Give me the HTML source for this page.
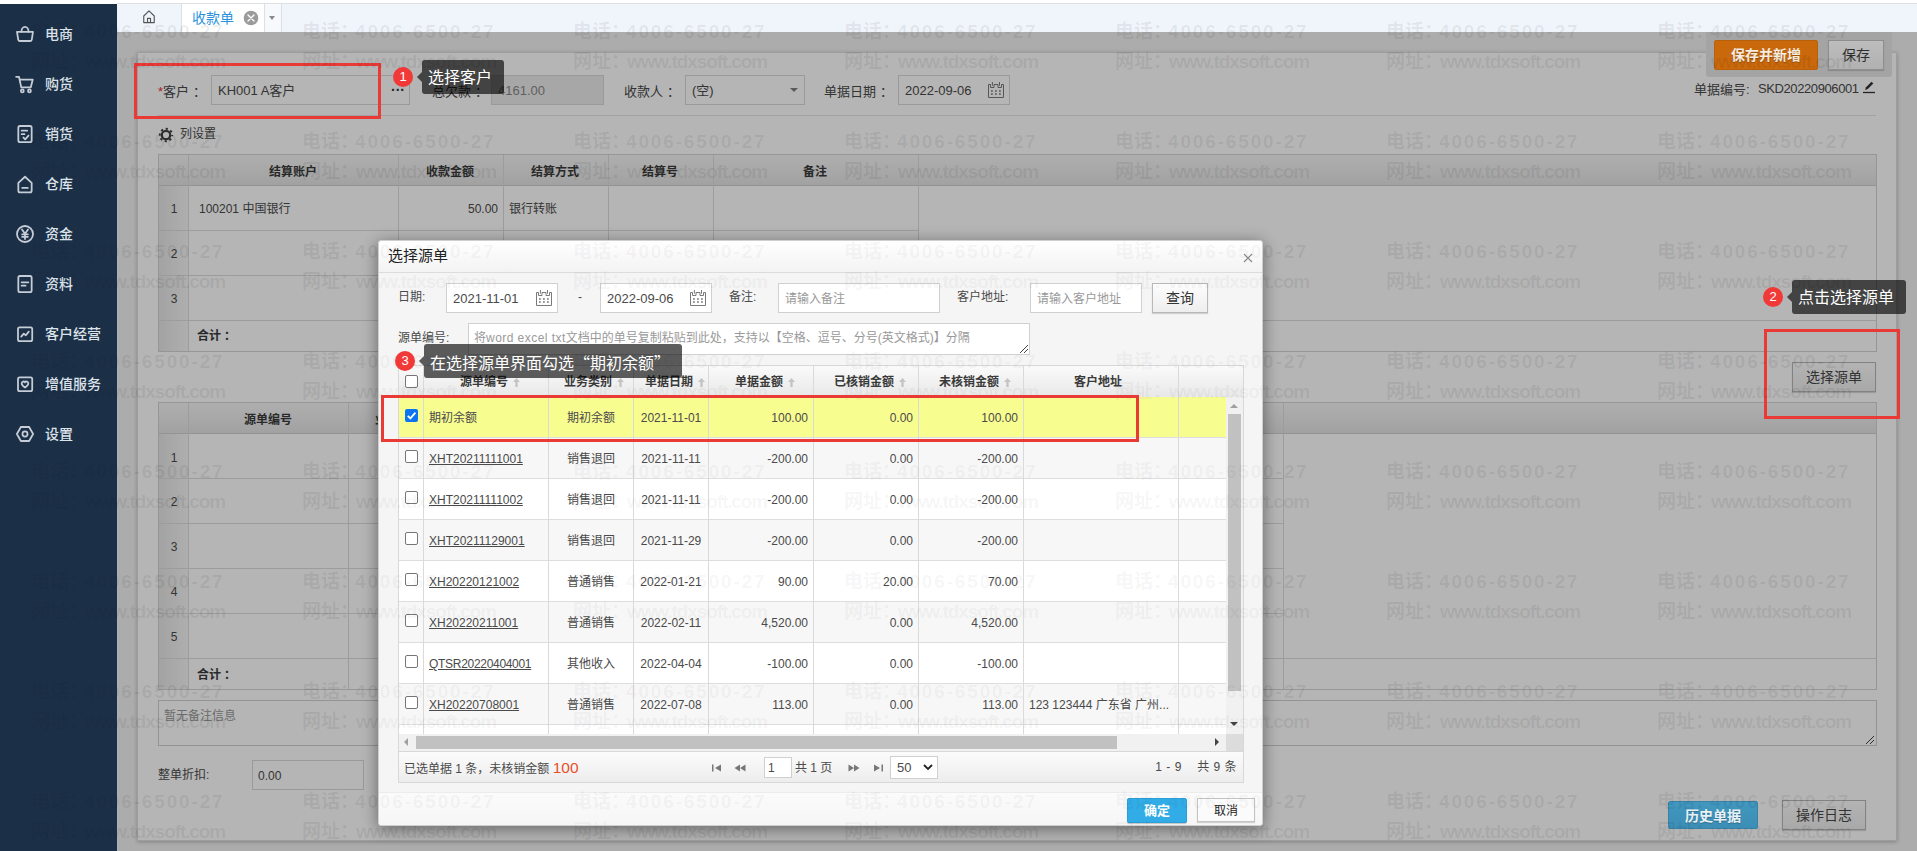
<!DOCTYPE html>
<html lang="zh-CN">
<head>
<meta charset="utf-8">
<title>收款单</title>
<style>
*{box-sizing:border-box;margin:0;padding:0}
html,body{width:1917px;height:851px;overflow:hidden;background:#fff}
body{position:relative;font-family:"Liberation Sans","Noto Sans CJK SC",sans-serif;font-size:12px;color:#4a4a4a;line-height:1}
.a{position:absolute}
.t{position:absolute;white-space:nowrap;line-height:16px;height:16px}
.b{font-weight:bold;color:#3a3a3a}
#side{left:0;top:4px;width:117px;height:847px;background:#1b2f47}
#side .it{position:absolute;left:45px;color:#dde3ea;font-size:14px;font-weight:500;line-height:20px;white-space:nowrap}
#side svg{position:absolute;left:15px;width:20px;height:20px}
#tabbar{left:117px;top:0;width:1800px;height:32px;background:#f0f5fb}
#page{left:117px;top:32px;width:1800px;height:819px;background:#f3f3f3}
#panel{left:137px;top:52px;width:1760px;height:789px;background:#fff;border:1px solid #ddd;box-shadow:0 1px 4px rgba(0,0,0,.25)}
.inp{position:absolute;border:1px solid #d0d0d0;background:#fff;height:30px}
.pi{border-color:#dadada}
.inp span{position:absolute;left:6px;top:7px;line-height:16px;white-space:nowrap;font-size:13px}
.grid{position:absolute;border:1px solid #d4d4d4;background:#fff}
.gh{position:absolute;left:0;top:0;right:0;background:linear-gradient(#f6f6f6,#e4e4e4);border-bottom:1px solid #d0d0d0}
.vl{position:absolute;width:1px;background:#dcdcdc}
.hl{position:absolute;height:1px;background:#dcdcdc}
.btn{position:absolute;border:1px solid #b8b8b8;background:linear-gradient(#fdfdfd,#eeeeee);color:#484848;text-align:center;font-size:13px;box-shadow:0 1px 1px rgba(0,0,0,.15)}
#mask{left:117px;top:32px;width:1800px;height:819px;background:rgba(0,0,0,.29)}
.red{position:absolute;border:3px solid #e93a36}
.tip{position:absolute;background:rgba(0,0,0,.63);color:#fff;border-radius:3px;font-size:16px;white-space:nowrap;height:34px;line-height:36px;padding:0 12px 0 6px}
.tip:before{content:"";position:absolute;left:-5px;top:12px;border:5px solid transparent;border-left:0;border-right-color:rgba(0,0,0,.63)}
.num{position:absolute;width:20px;height:20px;border-radius:10px;background:#f13a37;color:#fff;font-size:13px;text-align:center;line-height:20px}
#dlg{left:378px;top:240px;width:885px;height:586px;background:#f5f5f5;border:1px solid #cfcfcf;border-radius:3px;box-shadow:0 3px 16px rgba(0,0,0,.45)}
#wm{left:0;top:0;width:1917px;height:851px;overflow:hidden;pointer-events:none}
.wm{color:rgba(0,0,0,.072);pointer-events:none}
.wm div{position:absolute;font-size:19px;font-weight:bold;white-space:nowrap;line-height:24px}
</style>
</head>
<body>
<div id="tabbar" class="a">
<div class="a" style="left:0;top:3px;width:1800px;height:1px;background:#dcdfe3"></div>
<div class="a" style="left:0;top:0;width:1800px;height:3px;background:#fff"></div>
<svg class="a" style="left:25px;top:9px;width:14px;height:15px" viewBox="0 0 16 16" preserveAspectRatio="none" fill="none" stroke="#555" stroke-width="1.300" stroke-linejoin="round"><path d="M2 7.500L8 2l6 5.500V14.500H2z"/><path d="M6.300 14.500V10h3.400v4.500"/></svg>
<div class="a" style="left:64px;top:4px;width:84px;height:28px;background:#fff;border-left:1px solid #dcdfe3;border-right:1px solid #dcdfe3"></div>
<div class="t" style="left:75px;top:10px;font-size:14px;color:#2b93dc">收款单</div>
<svg class="a" style="left:125.500px;top:9.500px;width:16px;height:16px" viewBox="0 0 16 16"><circle cx="8" cy="8" r="7.300" fill="#9b9b9b"/><path d="M5 5l6 6M11 5l-6 6" stroke="#fff" stroke-width="1.400" stroke-linecap="round"/></svg>
<div class="a" style="left:148px;top:4px;width:17px;height:28px;background:#f7f9fc;border-right:1px solid #dcdfe3"></div>
<div class="a" style="left:152px;top:16px;border:3.500px solid transparent;border-top:4px solid #8a8a8a;border-bottom:0"></div>
</div>
<div id="page" class="a"></div>
<div id="panel" class="a"></div>
<div class="t " style="left:158px;top:84px;font-size:13px"><span style="color:#e33">*</span>客户<span style="margin-left:4px">：</span></div>
<div class="inp pi" style="left:211px;top:75px;width:199px"><span>KH001 A客户</span><b style="position:absolute;right:4px;top:6px;font-size:14px;line-height:16px;letter-spacing:0;color:#333">···</b></div>
<div class="t " style="left:432px;top:84px;font-size:13px">总欠款<span style="margin-left:4px">：</span></div>
<div class="inp pi" style="left:491px;top:75px;width:113px;background:#ebebeb"><span style="color:#888">4161.00</span></div>
<div class="t " style="left:624px;top:84px;font-size:13px">收款人<span style="margin-left:4px">：</span></div>
<div class="inp pi" style="left:685px;top:75px;width:120px"><span>(空)</span><i class="a" style="right:6px;top:12px;border:4px solid transparent;border-top:4px solid #808080;border-bottom:0"></i></div>
<div class="t " style="left:824px;top:84px;font-size:13px">单据日期<span style="margin-left:4px">：</span></div>
<div class="inp pi" style="left:898px;top:75px;width:112px"><span>2022-09-06</span><svg class="a" style="left:89px;top:6px;width:16px;height:16px" viewBox="0 0 16 16" fill="none" stroke="#7a7a7a" stroke-width="1"><path d="M.5 2.500H2.500V5.500H6V2.500H10V5.500H13.500V2.500H15.500V15.500H.500z"/><path d="M4.400 0V3.700M11.500 0V3.700"/><path d="M3 9h1.800M7 9h1.800M11 9h1.800M3 12h1.800M7 12h1.800M11 12h1.800" stroke-width="1.700"/></svg></div>
<div class="t " style="left:1694px;top:82px;font-size:13px">单据编号:</div>
<div class="t " style="left:1758px;top:81px;font-size:13px;letter-spacing:-.4px">SKD20220906001</div>
<svg class="a" style="left:1862px;top:80px;width:14px;height:14px" viewBox="0 0 14 14" fill="none" stroke="#333" stroke-width="1.300"><path d="M1 12.500h12"/><path d="M3 10l1-2.800 5.500-5.500 1.800 1.800-5.500 5.500z" fill="#333" stroke="none"/></svg>
<div class="hl" style="left:158px;top:115px;width:1718px;background:#e4e4e4"></div>
<svg class="a" style="left:158px;top:127px;width:16px;height:16px" viewBox="0 0 16 16" fill="none" stroke="#444"><circle cx="8" cy="8" r="4.200" stroke-width="2.200"/><circle cx="8" cy="8" r="6.200" stroke-width="2" stroke-dasharray="2.200 2.670" stroke-dashoffset="1.100"/></svg>
<div class="t " style="left:180px;top:126px;">列设置</div>
<div class="grid" style="left:158px;top:154px;width:1719px;height:198px">
<div class="gh" style="height:31px"></div>
<div class="a" style="left:0;top:31px;width:29px;height:165px;background:linear-gradient(90deg,#e6e6e6,#f6f6f6)"></div>
<div class="vl" style="left:29px;top:0;height:196px"></div>
<div class="vl" style="left:239px;top:0;height:165px"></div>
<div class="vl" style="left:344px;top:0;height:165px"></div>
<div class="vl" style="left:449px;top:0;height:165px"></div>
<div class="vl" style="left:554px;top:0;height:165px"></div>
<div class="vl" style="left:759px;top:0;height:165px"></div>
<div class="hl" style="left:0;top:75px;width:760px"></div>
<div class="hl" style="left:0;top:120px;width:760px"></div>
<div class="hl" style="left:0;top:165px;width:1717px"></div>
<div class="t b" style="left:134px;top:9px;transform:translateX(-50%);">结算账户</div>
<div class="t b" style="left:291px;top:9px;transform:translateX(-50%);">收款金额</div>
<div class="t b" style="left:396px;top:9px;transform:translateX(-50%);">结算方式</div>
<div class="t b" style="left:501px;top:9px;transform:translateX(-50%);">结算号</div>
<div class="t b" style="left:656px;top:9px;transform:translateX(-50%);">备注</div>
<div class="t " style="left:15px;top:46px;transform:translateX(-50%);">1</div>
<div class="t " style="left:15px;top:91px;transform:translateX(-50%);">2</div>
<div class="t " style="left:15px;top:136px;transform:translateX(-50%);">3</div>
<div class="t " style="left:40px;top:46px;">100201 中国银行</div>
<div class="t " style="left:339px;top:46px;transform:translateX(-100%);">50.00</div>
<div class="t " style="left:350px;top:46px;">银行转账</div>
<div class="t b" style="left:38px;top:173px;">合计<span style="margin-left:3px">：</span></div>
</div>
<div class="btn" style="left:1792px;top:362px;width:84px;height:30px;line-height:28px;font-size:14px">选择源单</div>
<div class="grid" style="left:158px;top:402px;width:1719px;height:288px">
<div class="gh" style="height:31px"></div>
<div class="a" style="left:0;top:31px;width:29px;height:255px;background:linear-gradient(90deg,#e6e6e6,#f6f6f6)"></div>
<div class="vl" style="left:29px;top:0;height:286px"></div>
<div class="vl" style="left:189px;top:0;height:286px"></div>
<div class="vl" style="left:1124px;top:0;height:286px"></div>
<div class="hl" style="left:0;top:75px;width:1125px"></div>
<div class="hl" style="left:0;top:120px;width:1125px"></div>
<div class="hl" style="left:0;top:165px;width:1125px"></div>
<div class="hl" style="left:0;top:210px;width:1125px"></div>
<div class="hl" style="left:0;top:255px;width:1717px"></div>
<div class="t b" style="left:109px;top:9px;transform:translateX(-50%);">源单编号</div>
<div class="t b" style="left:240px;top:9px;transform:translateX(-50%);">业务类别</div>
<div class="t " style="left:15px;top:47px;transform:translateX(-50%);">1</div>
<div class="t " style="left:15px;top:91px;transform:translateX(-50%);">2</div>
<div class="t " style="left:15px;top:136px;transform:translateX(-50%);">3</div>
<div class="t " style="left:15px;top:181px;transform:translateX(-50%);">4</div>
<div class="t " style="left:15px;top:226px;transform:translateX(-50%);">5</div>
<div class="t b" style="left:38px;top:264px;">合计<span style="margin-left:3px">：</span></div>
</div>
<div class="a" style="left:158px;top:700px;width:1719px;height:46px;border:1px solid #d0d0d0;background:#fff"></div>
<div class="t " style="left:164px;top:708px;color:#999">暂无备注信息</div>
<svg class="a" style="left:1865px;top:735px;width:10px;height:10px" viewBox="0 0 10 10" stroke="#444" stroke-width="1"><path d="M9 1L1 9M9 5L5 9"/></svg>
<div class="t " style="left:158px;top:767px;">整单折扣:</div>
<div class="inp pi" style="left:252px;top:760px;width:112px"><span style="font-size:12px;left:5px">0.00</span></div>
<div class="btn" style="left:1782px;top:800px;width:84px;height:30px;line-height:28px;font-size:14px">操作日志</div>
<div id="mask" class="a"></div>
<div class="a" style="left:117px;top:32px;width:1px;height:819px;background:#a9b3c0"></div>
<div class="a" style="left:1706px;top:32px;width:186px;height:45px;background:#a4a4a4;border-radius:0 0 3px 3px"></div>
<div class="a b" style="left:1714px;top:40px;width:104px;height:30px;background:#ca690b;border:1px solid #b8600a;border-radius:2px;color:#f6ece0;font-size:14px;text-align:center;line-height:28px;text-shadow:0 1px 1px rgba(0,0,0,.25)">保存并新增</div>
<div class="a" style="left:1828px;top:40px;width:56px;height:30px;line-height:28px;font-size:14px;text-align:center;color:#2e2e2e;background:linear-gradient(#bdbdbd,#b1b1b1);border:1px solid #8e8e8e;box-shadow:0 1px 1px rgba(0,0,0,.15)">保存</div>
<div class="a b" style="left:1668px;top:801px;width:90px;height:28px;background:linear-gradient(#4197bf,#3c8eb6);border:1px solid #3783a8;border-radius:2px;color:#e9f1f6;font-size:14px;text-align:center;line-height:28px;text-shadow:0 1px 1px rgba(0,0,0,.25)">历史单据</div>
<div class="red" style="left:134px;top:63px;width:247px;height:56px"></div>
<div class="num" style="left:393px;top:67px">1</div><div class="tip" style="left:422px;top:60px">选择客户</div>
<div class="red" style="left:1764px;top:329px;width:136px;height:90px"></div>
<div class="num" style="left:1763px;top:287px">2</div><div class="tip" style="left:1792px;top:280px">点击选择源单</div>
<div id="wm" class="a wm"><div style="left:31px;top:20px">电话：</div><div style="left:84px;top:20px;letter-spacing:1.850px">4006-6500-27</div><div style="left:31px;top:50px">网址：</div><div style="left:85px;top:50px;letter-spacing:-1.100px">www.tdxsoft.com</div>
<div style="left:302px;top:20px">电话：</div><div style="left:355px;top:20px;letter-spacing:1.850px">4006-6500-27</div><div style="left:302px;top:50px">网址：</div><div style="left:356px;top:50px;letter-spacing:-1.100px">www.tdxsoft.com</div>
<div style="left:573px;top:20px">电话：</div><div style="left:626px;top:20px;letter-spacing:1.850px">4006-6500-27</div><div style="left:573px;top:50px">网址：</div><div style="left:627px;top:50px;letter-spacing:-1.100px">www.tdxsoft.com</div>
<div style="left:844px;top:20px">电话：</div><div style="left:897px;top:20px;letter-spacing:1.850px">4006-6500-27</div><div style="left:844px;top:50px">网址：</div><div style="left:898px;top:50px;letter-spacing:-1.100px">www.tdxsoft.com</div>
<div style="left:1115px;top:20px">电话：</div><div style="left:1168px;top:20px;letter-spacing:1.850px">4006-6500-27</div><div style="left:1115px;top:50px">网址：</div><div style="left:1169px;top:50px;letter-spacing:-1.100px">www.tdxsoft.com</div>
<div style="left:1386px;top:20px">电话：</div><div style="left:1439px;top:20px;letter-spacing:1.850px">4006-6500-27</div><div style="left:1386px;top:50px">网址：</div><div style="left:1440px;top:50px;letter-spacing:-1.100px">www.tdxsoft.com</div>
<div style="left:1657px;top:20px">电话：</div><div style="left:1710px;top:20px;letter-spacing:1.850px">4006-6500-27</div><div style="left:1657px;top:50px">网址：</div><div style="left:1711px;top:50px;letter-spacing:-1.100px">www.tdxsoft.com</div>
<div style="left:1928px;top:20px">电话：</div><div style="left:1981px;top:20px;letter-spacing:1.850px">4006-6500-27</div><div style="left:1928px;top:50px">网址：</div><div style="left:1982px;top:50px;letter-spacing:-1.100px">www.tdxsoft.com</div>
<div style="left:31px;top:130px">电话：</div><div style="left:84px;top:130px;letter-spacing:1.850px">4006-6500-27</div><div style="left:31px;top:160px">网址：</div><div style="left:85px;top:160px;letter-spacing:-1.100px">www.tdxsoft.com</div>
<div style="left:302px;top:130px">电话：</div><div style="left:355px;top:130px;letter-spacing:1.850px">4006-6500-27</div><div style="left:302px;top:160px">网址：</div><div style="left:356px;top:160px;letter-spacing:-1.100px">www.tdxsoft.com</div>
<div style="left:573px;top:130px">电话：</div><div style="left:626px;top:130px;letter-spacing:1.850px">4006-6500-27</div><div style="left:573px;top:160px">网址：</div><div style="left:627px;top:160px;letter-spacing:-1.100px">www.tdxsoft.com</div>
<div style="left:844px;top:130px">电话：</div><div style="left:897px;top:130px;letter-spacing:1.850px">4006-6500-27</div><div style="left:844px;top:160px">网址：</div><div style="left:898px;top:160px;letter-spacing:-1.100px">www.tdxsoft.com</div>
<div style="left:1115px;top:130px">电话：</div><div style="left:1168px;top:130px;letter-spacing:1.850px">4006-6500-27</div><div style="left:1115px;top:160px">网址：</div><div style="left:1169px;top:160px;letter-spacing:-1.100px">www.tdxsoft.com</div>
<div style="left:1386px;top:130px">电话：</div><div style="left:1439px;top:130px;letter-spacing:1.850px">4006-6500-27</div><div style="left:1386px;top:160px">网址：</div><div style="left:1440px;top:160px;letter-spacing:-1.100px">www.tdxsoft.com</div>
<div style="left:1657px;top:130px">电话：</div><div style="left:1710px;top:130px;letter-spacing:1.850px">4006-6500-27</div><div style="left:1657px;top:160px">网址：</div><div style="left:1711px;top:160px;letter-spacing:-1.100px">www.tdxsoft.com</div>
<div style="left:1928px;top:130px">电话：</div><div style="left:1981px;top:130px;letter-spacing:1.850px">4006-6500-27</div><div style="left:1928px;top:160px">网址：</div><div style="left:1982px;top:160px;letter-spacing:-1.100px">www.tdxsoft.com</div>
<div style="left:31px;top:240px">电话：</div><div style="left:84px;top:240px;letter-spacing:1.850px">4006-6500-27</div><div style="left:31px;top:270px">网址：</div><div style="left:85px;top:270px;letter-spacing:-1.100px">www.tdxsoft.com</div>
<div style="left:302px;top:240px">电话：</div><div style="left:355px;top:240px;letter-spacing:1.850px">4006-6500-27</div><div style="left:302px;top:270px">网址：</div><div style="left:356px;top:270px;letter-spacing:-1.100px">www.tdxsoft.com</div>
<div style="left:573px;top:240px">电话：</div><div style="left:626px;top:240px;letter-spacing:1.850px">4006-6500-27</div><div style="left:573px;top:270px">网址：</div><div style="left:627px;top:270px;letter-spacing:-1.100px">www.tdxsoft.com</div>
<div style="left:844px;top:240px">电话：</div><div style="left:897px;top:240px;letter-spacing:1.850px">4006-6500-27</div><div style="left:844px;top:270px">网址：</div><div style="left:898px;top:270px;letter-spacing:-1.100px">www.tdxsoft.com</div>
<div style="left:1115px;top:240px">电话：</div><div style="left:1168px;top:240px;letter-spacing:1.850px">4006-6500-27</div><div style="left:1115px;top:270px">网址：</div><div style="left:1169px;top:270px;letter-spacing:-1.100px">www.tdxsoft.com</div>
<div style="left:1386px;top:240px">电话：</div><div style="left:1439px;top:240px;letter-spacing:1.850px">4006-6500-27</div><div style="left:1386px;top:270px">网址：</div><div style="left:1440px;top:270px;letter-spacing:-1.100px">www.tdxsoft.com</div>
<div style="left:1657px;top:240px">电话：</div><div style="left:1710px;top:240px;letter-spacing:1.850px">4006-6500-27</div><div style="left:1657px;top:270px">网址：</div><div style="left:1711px;top:270px;letter-spacing:-1.100px">www.tdxsoft.com</div>
<div style="left:1928px;top:240px">电话：</div><div style="left:1981px;top:240px;letter-spacing:1.850px">4006-6500-27</div><div style="left:1928px;top:270px">网址：</div><div style="left:1982px;top:270px;letter-spacing:-1.100px">www.tdxsoft.com</div>
<div style="left:31px;top:350px">电话：</div><div style="left:84px;top:350px;letter-spacing:1.850px">4006-6500-27</div><div style="left:31px;top:380px">网址：</div><div style="left:85px;top:380px;letter-spacing:-1.100px">www.tdxsoft.com</div>
<div style="left:302px;top:350px">电话：</div><div style="left:355px;top:350px;letter-spacing:1.850px">4006-6500-27</div><div style="left:302px;top:380px">网址：</div><div style="left:356px;top:380px;letter-spacing:-1.100px">www.tdxsoft.com</div>
<div style="left:573px;top:350px">电话：</div><div style="left:626px;top:350px;letter-spacing:1.850px">4006-6500-27</div><div style="left:573px;top:380px">网址：</div><div style="left:627px;top:380px;letter-spacing:-1.100px">www.tdxsoft.com</div>
<div style="left:844px;top:350px">电话：</div><div style="left:897px;top:350px;letter-spacing:1.850px">4006-6500-27</div><div style="left:844px;top:380px">网址：</div><div style="left:898px;top:380px;letter-spacing:-1.100px">www.tdxsoft.com</div>
<div style="left:1115px;top:350px">电话：</div><div style="left:1168px;top:350px;letter-spacing:1.850px">4006-6500-27</div><div style="left:1115px;top:380px">网址：</div><div style="left:1169px;top:380px;letter-spacing:-1.100px">www.tdxsoft.com</div>
<div style="left:1386px;top:350px">电话：</div><div style="left:1439px;top:350px;letter-spacing:1.850px">4006-6500-27</div><div style="left:1386px;top:380px">网址：</div><div style="left:1440px;top:380px;letter-spacing:-1.100px">www.tdxsoft.com</div>
<div style="left:1657px;top:350px">电话：</div><div style="left:1710px;top:350px;letter-spacing:1.850px">4006-6500-27</div><div style="left:1657px;top:380px">网址：</div><div style="left:1711px;top:380px;letter-spacing:-1.100px">www.tdxsoft.com</div>
<div style="left:1928px;top:350px">电话：</div><div style="left:1981px;top:350px;letter-spacing:1.850px">4006-6500-27</div><div style="left:1928px;top:380px">网址：</div><div style="left:1982px;top:380px;letter-spacing:-1.100px">www.tdxsoft.com</div>
<div style="left:31px;top:460px">电话：</div><div style="left:84px;top:460px;letter-spacing:1.850px">4006-6500-27</div><div style="left:31px;top:490px">网址：</div><div style="left:85px;top:490px;letter-spacing:-1.100px">www.tdxsoft.com</div>
<div style="left:302px;top:460px">电话：</div><div style="left:355px;top:460px;letter-spacing:1.850px">4006-6500-27</div><div style="left:302px;top:490px">网址：</div><div style="left:356px;top:490px;letter-spacing:-1.100px">www.tdxsoft.com</div>
<div style="left:573px;top:460px">电话：</div><div style="left:626px;top:460px;letter-spacing:1.850px">4006-6500-27</div><div style="left:573px;top:490px">网址：</div><div style="left:627px;top:490px;letter-spacing:-1.100px">www.tdxsoft.com</div>
<div style="left:844px;top:460px">电话：</div><div style="left:897px;top:460px;letter-spacing:1.850px">4006-6500-27</div><div style="left:844px;top:490px">网址：</div><div style="left:898px;top:490px;letter-spacing:-1.100px">www.tdxsoft.com</div>
<div style="left:1115px;top:460px">电话：</div><div style="left:1168px;top:460px;letter-spacing:1.850px">4006-6500-27</div><div style="left:1115px;top:490px">网址：</div><div style="left:1169px;top:490px;letter-spacing:-1.100px">www.tdxsoft.com</div>
<div style="left:1386px;top:460px">电话：</div><div style="left:1439px;top:460px;letter-spacing:1.850px">4006-6500-27</div><div style="left:1386px;top:490px">网址：</div><div style="left:1440px;top:490px;letter-spacing:-1.100px">www.tdxsoft.com</div>
<div style="left:1657px;top:460px">电话：</div><div style="left:1710px;top:460px;letter-spacing:1.850px">4006-6500-27</div><div style="left:1657px;top:490px">网址：</div><div style="left:1711px;top:490px;letter-spacing:-1.100px">www.tdxsoft.com</div>
<div style="left:1928px;top:460px">电话：</div><div style="left:1981px;top:460px;letter-spacing:1.850px">4006-6500-27</div><div style="left:1928px;top:490px">网址：</div><div style="left:1982px;top:490px;letter-spacing:-1.100px">www.tdxsoft.com</div>
<div style="left:31px;top:570px">电话：</div><div style="left:84px;top:570px;letter-spacing:1.850px">4006-6500-27</div><div style="left:31px;top:600px">网址：</div><div style="left:85px;top:600px;letter-spacing:-1.100px">www.tdxsoft.com</div>
<div style="left:302px;top:570px">电话：</div><div style="left:355px;top:570px;letter-spacing:1.850px">4006-6500-27</div><div style="left:302px;top:600px">网址：</div><div style="left:356px;top:600px;letter-spacing:-1.100px">www.tdxsoft.com</div>
<div style="left:573px;top:570px">电话：</div><div style="left:626px;top:570px;letter-spacing:1.850px">4006-6500-27</div><div style="left:573px;top:600px">网址：</div><div style="left:627px;top:600px;letter-spacing:-1.100px">www.tdxsoft.com</div>
<div style="left:844px;top:570px">电话：</div><div style="left:897px;top:570px;letter-spacing:1.850px">4006-6500-27</div><div style="left:844px;top:600px">网址：</div><div style="left:898px;top:600px;letter-spacing:-1.100px">www.tdxsoft.com</div>
<div style="left:1115px;top:570px">电话：</div><div style="left:1168px;top:570px;letter-spacing:1.850px">4006-6500-27</div><div style="left:1115px;top:600px">网址：</div><div style="left:1169px;top:600px;letter-spacing:-1.100px">www.tdxsoft.com</div>
<div style="left:1386px;top:570px">电话：</div><div style="left:1439px;top:570px;letter-spacing:1.850px">4006-6500-27</div><div style="left:1386px;top:600px">网址：</div><div style="left:1440px;top:600px;letter-spacing:-1.100px">www.tdxsoft.com</div>
<div style="left:1657px;top:570px">电话：</div><div style="left:1710px;top:570px;letter-spacing:1.850px">4006-6500-27</div><div style="left:1657px;top:600px">网址：</div><div style="left:1711px;top:600px;letter-spacing:-1.100px">www.tdxsoft.com</div>
<div style="left:1928px;top:570px">电话：</div><div style="left:1981px;top:570px;letter-spacing:1.850px">4006-6500-27</div><div style="left:1928px;top:600px">网址：</div><div style="left:1982px;top:600px;letter-spacing:-1.100px">www.tdxsoft.com</div>
<div style="left:31px;top:680px">电话：</div><div style="left:84px;top:680px;letter-spacing:1.850px">4006-6500-27</div><div style="left:31px;top:710px">网址：</div><div style="left:85px;top:710px;letter-spacing:-1.100px">www.tdxsoft.com</div>
<div style="left:302px;top:680px">电话：</div><div style="left:355px;top:680px;letter-spacing:1.850px">4006-6500-27</div><div style="left:302px;top:710px">网址：</div><div style="left:356px;top:710px;letter-spacing:-1.100px">www.tdxsoft.com</div>
<div style="left:573px;top:680px">电话：</div><div style="left:626px;top:680px;letter-spacing:1.850px">4006-6500-27</div><div style="left:573px;top:710px">网址：</div><div style="left:627px;top:710px;letter-spacing:-1.100px">www.tdxsoft.com</div>
<div style="left:844px;top:680px">电话：</div><div style="left:897px;top:680px;letter-spacing:1.850px">4006-6500-27</div><div style="left:844px;top:710px">网址：</div><div style="left:898px;top:710px;letter-spacing:-1.100px">www.tdxsoft.com</div>
<div style="left:1115px;top:680px">电话：</div><div style="left:1168px;top:680px;letter-spacing:1.850px">4006-6500-27</div><div style="left:1115px;top:710px">网址：</div><div style="left:1169px;top:710px;letter-spacing:-1.100px">www.tdxsoft.com</div>
<div style="left:1386px;top:680px">电话：</div><div style="left:1439px;top:680px;letter-spacing:1.850px">4006-6500-27</div><div style="left:1386px;top:710px">网址：</div><div style="left:1440px;top:710px;letter-spacing:-1.100px">www.tdxsoft.com</div>
<div style="left:1657px;top:680px">电话：</div><div style="left:1710px;top:680px;letter-spacing:1.850px">4006-6500-27</div><div style="left:1657px;top:710px">网址：</div><div style="left:1711px;top:710px;letter-spacing:-1.100px">www.tdxsoft.com</div>
<div style="left:1928px;top:680px">电话：</div><div style="left:1981px;top:680px;letter-spacing:1.850px">4006-6500-27</div><div style="left:1928px;top:710px">网址：</div><div style="left:1982px;top:710px;letter-spacing:-1.100px">www.tdxsoft.com</div>
<div style="left:31px;top:790px">电话：</div><div style="left:84px;top:790px;letter-spacing:1.850px">4006-6500-27</div><div style="left:31px;top:820px">网址：</div><div style="left:85px;top:820px;letter-spacing:-1.100px">www.tdxsoft.com</div>
<div style="left:302px;top:790px">电话：</div><div style="left:355px;top:790px;letter-spacing:1.850px">4006-6500-27</div><div style="left:302px;top:820px">网址：</div><div style="left:356px;top:820px;letter-spacing:-1.100px">www.tdxsoft.com</div>
<div style="left:573px;top:790px">电话：</div><div style="left:626px;top:790px;letter-spacing:1.850px">4006-6500-27</div><div style="left:573px;top:820px">网址：</div><div style="left:627px;top:820px;letter-spacing:-1.100px">www.tdxsoft.com</div>
<div style="left:844px;top:790px">电话：</div><div style="left:897px;top:790px;letter-spacing:1.850px">4006-6500-27</div><div style="left:844px;top:820px">网址：</div><div style="left:898px;top:820px;letter-spacing:-1.100px">www.tdxsoft.com</div>
<div style="left:1115px;top:790px">电话：</div><div style="left:1168px;top:790px;letter-spacing:1.850px">4006-6500-27</div><div style="left:1115px;top:820px">网址：</div><div style="left:1169px;top:820px;letter-spacing:-1.100px">www.tdxsoft.com</div>
<div style="left:1386px;top:790px">电话：</div><div style="left:1439px;top:790px;letter-spacing:1.850px">4006-6500-27</div><div style="left:1386px;top:820px">网址：</div><div style="left:1440px;top:820px;letter-spacing:-1.100px">www.tdxsoft.com</div>
<div style="left:1657px;top:790px">电话：</div><div style="left:1710px;top:790px;letter-spacing:1.850px">4006-6500-27</div><div style="left:1657px;top:820px">网址：</div><div style="left:1711px;top:820px;letter-spacing:-1.100px">www.tdxsoft.com</div>
<div style="left:1928px;top:790px">电话：</div><div style="left:1981px;top:790px;letter-spacing:1.850px">4006-6500-27</div><div style="left:1928px;top:820px">网址：</div><div style="left:1982px;top:820px;letter-spacing:-1.100px">www.tdxsoft.com</div></div>
<div id="side" class="a">
<svg viewBox="0 0 18 18" style="top:20px" fill="none" stroke="#c6cdd6" stroke-width="1.600" stroke-linecap="round" stroke-linejoin="round"><path d="M1.800 7h14.400l-1.100 7a1.600 1.600 0 0 1-1.600 1.300H4.500a1.600 1.600 0 0 1-1.600-1.300z"/><path d="M5.800 7c0-2.500 1.400-4.400 3.200-4.400s3.200 1.900 3.200 4.400"/></svg>
<div class="it" style="top:20px">电商</div>
<svg viewBox="0 0 18 18" style="top:70px" fill="none" stroke="#c6cdd6" stroke-width="1.600" stroke-linecap="round" stroke-linejoin="round"><path d="M1 2.5h2.6l2 9.5h8.6l1.8-7H4.5"/><circle cx="6.6" cy="15.2" r="1.3"/><circle cx="13" cy="15.2" r="1.3"/></svg>
<div class="it" style="top:70px">购货</div>
<svg viewBox="0 0 18 18" style="top:120px" fill="none" stroke="#c6cdd6" stroke-width="1.600" stroke-linecap="round" stroke-linejoin="round"><rect x="3" y="1.8" width="12" height="14.6" rx="1.5"/><path d="M6 6h5M6 9.2h2.5M7.6 12.2l1.6 1.6 3-3.4"/></svg>
<div class="it" style="top:120px">销货</div>
<svg viewBox="0 0 18 18" style="top:170px" fill="none" stroke="#c6cdd6" stroke-width="1.600" stroke-linecap="round" stroke-linejoin="round"><path d="M3 8l6-5.5L15 8v7a1.5 1.5 0 0 1-1.5 1.5h-9A1.5 1.5 0 0 1 3 15z"/><path d="M6.5 12.5h5"/></svg>
<div class="it" style="top:170px">仓库</div>
<svg viewBox="0 0 18 18" style="top:220px" fill="none" stroke="#c6cdd6" stroke-width="1.600" stroke-linecap="round" stroke-linejoin="round"><circle cx="9" cy="9" r="7.2"/><path d="M6.3 5l2.7 3.8L11.7 5M9 8.8V13.6M6.4 9.3h5.2M6.4 11.5h5.2"/></svg>
<div class="it" style="top:220px">资金</div>
<svg viewBox="0 0 18 18" style="top:270px" fill="none" stroke="#c6cdd6" stroke-width="1.600" stroke-linecap="round" stroke-linejoin="round"><rect x="3" y="1.8" width="12" height="14.6" rx="1.5"/><path d="M6 7.500h6M6 10.500h3.500"/></svg>
<div class="it" style="top:270px">资料</div>
<svg viewBox="0 0 18 18" style="top:320px" fill="none" stroke="#c6cdd6" stroke-width="1.600" stroke-linecap="round" stroke-linejoin="round"><rect x="2.700" y="3" width="12.800" height="12.400" rx="1.500"/><path d="M5.600 11.300l2.300-2.600 1.900 1.400 2.600-3.200"/></svg>
<div class="it" style="top:320px">客户经营</div>
<svg viewBox="0 0 18 18" style="top:370px" fill="none" stroke="#c6cdd6" stroke-width="1.600" stroke-linecap="round" stroke-linejoin="round"><rect x="2.700" y="3" width="12.800" height="12.400" rx="1.500"/><path d="M9 12.2s-3-1.9-3-3.8a1.6 1.6 0 0 1 3-.8 1.6 1.6 0 0 1 3 .8c0 1.9-3 3.800-3 3.800z"/></svg>
<div class="it" style="top:370px">增值服务</div>
<svg viewBox="0 0 18 18" style="top:420px" fill="none" stroke="#c6cdd6" stroke-width="1.600" stroke-linecap="round" stroke-linejoin="round"><path d="M1.700 9l3.600-6.300h7.400L16.300 9l-3.600 6.300H5.300z"/><circle cx="9" cy="9" r="2.300"/></svg>
<div class="it" style="top:420px">设置</div>
<div class="a wm" style="left:0;top:0;width:117px;height:847px;overflow:hidden;color:rgba(0,0,0,.05)"><div style="left:31px;top:16px">电话：</div><div style="left:84px;top:16px;letter-spacing:1.850px">4006-6500-27</div><div style="left:31px;top:46px">网址：</div><div style="left:85px;top:46px;letter-spacing:-1.100px">www.tdxsoft.com</div>
<div style="left:31px;top:126px">电话：</div><div style="left:84px;top:126px;letter-spacing:1.850px">4006-6500-27</div><div style="left:31px;top:156px">网址：</div><div style="left:85px;top:156px;letter-spacing:-1.100px">www.tdxsoft.com</div>
<div style="left:31px;top:236px">电话：</div><div style="left:84px;top:236px;letter-spacing:1.850px">4006-6500-27</div><div style="left:31px;top:266px">网址：</div><div style="left:85px;top:266px;letter-spacing:-1.100px">www.tdxsoft.com</div>
<div style="left:31px;top:346px">电话：</div><div style="left:84px;top:346px;letter-spacing:1.850px">4006-6500-27</div><div style="left:31px;top:376px">网址：</div><div style="left:85px;top:376px;letter-spacing:-1.100px">www.tdxsoft.com</div>
<div style="left:31px;top:456px">电话：</div><div style="left:84px;top:456px;letter-spacing:1.850px">4006-6500-27</div><div style="left:31px;top:486px">网址：</div><div style="left:85px;top:486px;letter-spacing:-1.100px">www.tdxsoft.com</div>
<div style="left:31px;top:566px">电话：</div><div style="left:84px;top:566px;letter-spacing:1.850px">4006-6500-27</div><div style="left:31px;top:596px">网址：</div><div style="left:85px;top:596px;letter-spacing:-1.100px">www.tdxsoft.com</div>
<div style="left:31px;top:676px">电话：</div><div style="left:84px;top:676px;letter-spacing:1.850px">4006-6500-27</div><div style="left:31px;top:706px">网址：</div><div style="left:85px;top:706px;letter-spacing:-1.100px">www.tdxsoft.com</div>
<div style="left:31px;top:786px">电话：</div><div style="left:84px;top:786px;letter-spacing:1.850px">4006-6500-27</div><div style="left:31px;top:816px">网址：</div><div style="left:85px;top:816px;letter-spacing:-1.100px">www.tdxsoft.com</div></div>
</div>
<div id="dlg" class="a">
<div class="a" style="left:0;top:0;width:883px;height:32px;background:linear-gradient(#ffffff,#f3f3f3);border-bottom:1px solid #dcdcdc;border-radius:3px 3px 0 0"></div>
<div class="t" style="left:9px;top:7px;font-size:15px;color:#222">选择源单</div>
<svg class="a" style="left:864px;top:12px;width:10px;height:10px" viewBox="0 0 10 10" stroke="#858585" stroke-width="1.100" fill="none"><path d="M1 1l8 8M9 1l-8 8"/></svg>
<div class="t " style="left:19px;top:48px;">日期:</div>
<div class="inp" style="left:67px;top:42px;width:112px"><span>2021-11-01</span><svg class="a" style="left:89px;top:6px;width:16px;height:16px" viewBox="0 0 16 16" fill="none" stroke="#7a7a7a" stroke-width="1"><path d="M.5 2.500H2.500V5.500H6V2.500H10V5.500H13.500V2.500H15.500V15.500H.500z"/><path d="M4.400 0V3.700M11.500 0V3.700"/><path d="M3 9h1.800M7 9h1.800M11 9h1.800M3 12h1.800M7 12h1.800M11 12h1.800" stroke-width="1.700"/></svg></div>
<div class="t " style="left:199px;top:48px;">-</div>
<div class="inp" style="left:221px;top:42px;width:112px"><span>2022-09-06</span><svg class="a" style="left:89px;top:6px;width:16px;height:16px" viewBox="0 0 16 16" fill="none" stroke="#7a7a7a" stroke-width="1"><path d="M.5 2.500H2.500V5.500H6V2.500H10V5.500H13.500V2.500H15.500V15.500H.500z"/><path d="M4.400 0V3.700M11.500 0V3.700"/><path d="M3 9h1.800M7 9h1.800M11 9h1.800M3 12h1.800M7 12h1.800M11 12h1.800" stroke-width="1.700"/></svg></div>
<div class="t " style="left:350px;top:48px;">备注:</div>
<div class="inp" style="left:399px;top:42px;width:162px"><span style="color:#999;font-size:12px">请输入备注</span></div>
<div class="t " style="left:578px;top:48px;">客户地址:</div>
<div class="inp" style="left:651px;top:42px;width:112px"><span style="color:#999;font-size:12px">请输入客户地址</span></div>
<div class="btn" style="left:773px;top:42px;width:56px;height:30px;line-height:28px;color:#333;font-size:14px">查询</div>
<div class="t " style="left:19px;top:89px;">源单编号:</div>
<div class="a" style="left:89px;top:82px;width:562px;height:32px;border:1px solid #d0d0d0;background:#fff"></div>
<div class="t " style="left:95px;top:89px;color:#999">将<span style="letter-spacing:.45px">word excel txt</span>文档中的单号复制粘贴到此处，支持以【空格、逗号、分号(英文格式)】分隔</div>
<svg class="a" style="left:640px;top:103px;width:10px;height:10px" viewBox="0 0 10 10" stroke="#444" stroke-width="1"><path d="M9 1L1 9M9 5L5 9"/></svg>
<div class="a" style="left:19px;top:124px;width:846px;height:418px;border:1px solid #d8d8d8;background:#fff;overflow:hidden">
<div class="a" style="left:0;top:0;width:844px;height:32px;background:linear-gradient(#fafafa,#e8e8e8);border-bottom:1px solid #d4d4d4"></div>
<div class="a" style="left:0;top:31px;width:827px;height:41px;background:#f8fd90;border-bottom:1px solid #dedede"></div>
<div class="a" style="left:0;top:72px;width:827px;height:41px;background:#f7f7f7;border-bottom:1px solid #dedede"></div>
<div class="a" style="left:0;top:113px;width:827px;height:41px;background:#fff;border-bottom:1px solid #dedede"></div>
<div class="a" style="left:0;top:154px;width:827px;height:41px;background:#f7f7f7;border-bottom:1px solid #dedede"></div>
<div class="a" style="left:0;top:195px;width:827px;height:41px;background:#fff;border-bottom:1px solid #dedede"></div>
<div class="a" style="left:0;top:236px;width:827px;height:41px;background:#f7f7f7;border-bottom:1px solid #dedede"></div>
<div class="a" style="left:0;top:277px;width:827px;height:41px;background:#fff;border-bottom:1px solid #dedede"></div>
<div class="a" style="left:0;top:318px;width:827px;height:41px;background:#f7f7f7;border-bottom:1px solid #dedede"></div>
<div class="vl" style="left:24px;top:0;height:369px;background:#dadada"></div>
<div class="vl" style="left:149px;top:0;height:369px;background:#dadada"></div>
<div class="vl" style="left:234px;top:0;height:369px;background:#dadada"></div>
<div class="vl" style="left:309px;top:0;height:369px;background:#dadada"></div>
<div class="vl" style="left:414px;top:0;height:369px;background:#dadada"></div>
<div class="vl" style="left:519px;top:0;height:369px;background:#dadada"></div>
<div class="vl" style="left:624px;top:0;height:369px;background:#dadada"></div>
<div class="vl" style="left:779px;top:0;height:369px;background:#dadada"></div>
<div class="a" style="left:6px;top:9px;width:13px;height:13px;border:1px solid #767676;border-radius:2px;background:#fff"></div>
<div class="t b" style="left:91px;top:8px;transform:translateX(-50%);">源单编号<svg style="display:inline-block;vertical-align:-1px;margin-left:5px;width:7px;height:9px" viewBox="0 0 7 9"><path d="M3.500 0L7 4H4.700V9H2.300V4H0z" fill="#c4c4c4"/></svg></div>
<div class="t b" style="left:195px;top:8px;transform:translateX(-50%);">业务类别<svg style="display:inline-block;vertical-align:-1px;margin-left:5px;width:7px;height:9px" viewBox="0 0 7 9"><path d="M3.500 0L7 4H4.700V9H2.300V4H0z" fill="#c4c4c4"/></svg></div>
<div class="t b" style="left:276px;top:8px;transform:translateX(-50%);">单据日期<svg style="display:inline-block;vertical-align:-1px;margin-left:5px;width:7px;height:9px" viewBox="0 0 7 9"><path d="M3.500 0L7 4H4.700V9H2.300V4H0z" fill="#c4c4c4"/></svg></div>
<div class="t b" style="left:366px;top:8px;transform:translateX(-50%);">单据金额<svg style="display:inline-block;vertical-align:-1px;margin-left:5px;width:7px;height:9px" viewBox="0 0 7 9"><path d="M3.500 0L7 4H4.700V9H2.300V4H0z" fill="#c4c4c4"/></svg></div>
<div class="t b" style="left:471px;top:8px;transform:translateX(-50%);">已核销金额<svg style="display:inline-block;vertical-align:-1px;margin-left:5px;width:7px;height:9px" viewBox="0 0 7 9"><path d="M3.500 0L7 4H4.700V9H2.300V4H0z" fill="#c4c4c4"/></svg></div>
<div class="t b" style="left:576px;top:8px;transform:translateX(-50%);">未核销金额<svg style="display:inline-block;vertical-align:-1px;margin-left:5px;width:7px;height:9px" viewBox="0 0 7 9"><path d="M3.500 0L7 4H4.700V9H2.300V4H0z" fill="#c4c4c4"/></svg></div>
<div class="t b" style="left:699px;top:8px;transform:translateX(-50%);">客户地址</div>
<div class="a" style="left:6px;top:43px;width:13px;height:13px;border-radius:2px;background:#0b74f4"></div><svg class="a" style="left:6px;top:43px;width:13px;height:13px" viewBox="0 0 13 13" fill="none" stroke="#fff" stroke-width="1.800"><path d="M2.800 6.800l2.600 2.600 5-5.800"/></svg>
<div class="t " style="left:30px;top:44px;">期初余额</div>
<div class="t " style="left:192px;top:44px;transform:translateX(-50%);">期初余额</div>
<div class="t " style="left:272px;top:44px;transform:translateX(-50%);">2021-11-01</div>
<div class="t " style="left:409px;top:44px;transform:translateX(-100%);">100.00</div>
<div class="t " style="left:514px;top:44px;transform:translateX(-100%);">0.00</div>
<div class="t " style="left:619px;top:44px;transform:translateX(-100%);">100.00</div>
<div class="a" style="left:6px;top:84px;width:13px;height:13px;border:1px solid #767676;border-radius:2px;background:#fff"></div>
<div class="t " style="left:30px;top:85px;text-decoration:underline">XHT20211111001</div>
<div class="t " style="left:192px;top:85px;transform:translateX(-50%);">销售退回</div>
<div class="t " style="left:272px;top:85px;transform:translateX(-50%);">2021-11-11</div>
<div class="t " style="left:409px;top:85px;transform:translateX(-100%);">-200.00</div>
<div class="t " style="left:514px;top:85px;transform:translateX(-100%);">0.00</div>
<div class="t " style="left:619px;top:85px;transform:translateX(-100%);">-200.00</div>
<div class="a" style="left:6px;top:125px;width:13px;height:13px;border:1px solid #767676;border-radius:2px;background:#fff"></div>
<div class="t " style="left:30px;top:126px;text-decoration:underline">XHT20211111002</div>
<div class="t " style="left:192px;top:126px;transform:translateX(-50%);">销售退回</div>
<div class="t " style="left:272px;top:126px;transform:translateX(-50%);">2021-11-11</div>
<div class="t " style="left:409px;top:126px;transform:translateX(-100%);">-200.00</div>
<div class="t " style="left:514px;top:126px;transform:translateX(-100%);">0.00</div>
<div class="t " style="left:619px;top:126px;transform:translateX(-100%);">-200.00</div>
<div class="a" style="left:6px;top:166px;width:13px;height:13px;border:1px solid #767676;border-radius:2px;background:#fff"></div>
<div class="t " style="left:30px;top:167px;text-decoration:underline">XHT20211129001</div>
<div class="t " style="left:192px;top:167px;transform:translateX(-50%);">销售退回</div>
<div class="t " style="left:272px;top:167px;transform:translateX(-50%);">2021-11-29</div>
<div class="t " style="left:409px;top:167px;transform:translateX(-100%);">-200.00</div>
<div class="t " style="left:514px;top:167px;transform:translateX(-100%);">0.00</div>
<div class="t " style="left:619px;top:167px;transform:translateX(-100%);">-200.00</div>
<div class="a" style="left:6px;top:207px;width:13px;height:13px;border:1px solid #767676;border-radius:2px;background:#fff"></div>
<div class="t " style="left:30px;top:208px;text-decoration:underline">XH20220121002</div>
<div class="t " style="left:192px;top:208px;transform:translateX(-50%);">普通销售</div>
<div class="t " style="left:272px;top:208px;transform:translateX(-50%);">2022-01-21</div>
<div class="t " style="left:409px;top:208px;transform:translateX(-100%);">90.00</div>
<div class="t " style="left:514px;top:208px;transform:translateX(-100%);">20.00</div>
<div class="t " style="left:619px;top:208px;transform:translateX(-100%);">70.00</div>
<div class="a" style="left:6px;top:248px;width:13px;height:13px;border:1px solid #767676;border-radius:2px;background:#fff"></div>
<div class="t " style="left:30px;top:249px;text-decoration:underline">XH20220211001</div>
<div class="t " style="left:192px;top:249px;transform:translateX(-50%);">普通销售</div>
<div class="t " style="left:272px;top:249px;transform:translateX(-50%);">2022-02-11</div>
<div class="t " style="left:409px;top:249px;transform:translateX(-100%);">4,520.00</div>
<div class="t " style="left:514px;top:249px;transform:translateX(-100%);">0.00</div>
<div class="t " style="left:619px;top:249px;transform:translateX(-100%);">4,520.00</div>
<div class="a" style="left:6px;top:289px;width:13px;height:13px;border:1px solid #767676;border-radius:2px;background:#fff"></div>
<div class="t " style="left:30px;top:290px;text-decoration:underline;letter-spacing:-.3px">QTSR20220404001</div>
<div class="t " style="left:192px;top:290px;transform:translateX(-50%);">其他收入</div>
<div class="t " style="left:272px;top:290px;transform:translateX(-50%);">2022-04-04</div>
<div class="t " style="left:409px;top:290px;transform:translateX(-100%);">-100.00</div>
<div class="t " style="left:514px;top:290px;transform:translateX(-100%);">0.00</div>
<div class="t " style="left:619px;top:290px;transform:translateX(-100%);">-100.00</div>
<div class="a" style="left:6px;top:330px;width:13px;height:13px;border:1px solid #767676;border-radius:2px;background:#fff"></div>
<div class="t " style="left:30px;top:331px;text-decoration:underline">XH20220708001</div>
<div class="t " style="left:192px;top:331px;transform:translateX(-50%);">普通销售</div>
<div class="t " style="left:272px;top:331px;transform:translateX(-50%);">2022-07-08</div>
<div class="t " style="left:409px;top:331px;transform:translateX(-100%);">113.00</div>
<div class="t " style="left:514px;top:331px;transform:translateX(-100%);">0.00</div>
<div class="t " style="left:619px;top:331px;transform:translateX(-100%);">113.00</div>
<div class="t " style="left:630px;top:331px;">123 123444 广东省 广州...</div>
<div class="a" style="left:827px;top:31px;width:18px;height:337px;background:#f1f1f1"></div>
<div class="a" style="left:829px;top:48px;width:13px;height:277px;background:#c1c1c1"></div>
<div class="a" style="left:831px;top:38px;border:4px solid transparent;border-bottom:4px solid #a0a0a0;border-top:0"></div>
<div class="a" style="left:831px;top:356px;border:4px solid transparent;border-top:4px solid #444;border-bottom:0"></div>
<div class="a" style="left:0;top:368px;width:845px;height:17px;background:#f1f1f1"></div>
<div class="a" style="left:17px;top:370px;width:701px;height:13px;background:#c1c1c1"></div>
<div class="a" style="left:5px;top:372px;border:4px solid transparent;border-right:4px solid #a0a0a0;border-left:0"></div>
<div class="a" style="left:816px;top:372px;border:4px solid transparent;border-left:4px solid #444;border-right:0"></div>
<div class="a" style="left:827px;top:368px;width:18px;height:17px;background:#dcdcdc"></div>
<div class="a" style="left:0;top:385px;width:845px;height:33px;background:linear-gradient(#fbfbfb,#ececec);border-top:1px solid #d8d8d8"></div>
<div class="t " style="left:5px;top:394px;">已选单据 1 条，未核销金额 <span style="color:#e8502a;font-size:15.500px">100</span></div>
<svg class="a" style="left:312px;top:398px;width:12px;height:8px" viewBox="0 0 12 8" fill="#777"><rect x="1" y="0.500" width="1.500" height="7"/><path d="M10 0.500v7L4 4z"/></svg>
<svg class="a" style="left:335px;top:398px;width:12px;height:8px" viewBox="0 0 12 8" fill="#777"><path d="M6 0.500v7L0.500 4zM11.500 0.500v7L6 4z"/></svg>
<div class="inp" style="left:365px;top:391px;width:28px;height:21px"><span style="left:3px;top:2px;font-size:12px">1</span></div>
<div class="t " style="left:396px;top:394px;">共 1 页</div>
<svg class="a" style="left:449px;top:398px;width:12px;height:8px" viewBox="0 0 12 8" fill="#777"><path d="M0.500 0.500v7L6 4zM6 0.500v7L11.500 4z"/></svg>
<svg class="a" style="left:473px;top:398px;width:12px;height:8px" viewBox="0 0 12 8" fill="#777"><rect x="9.500" y="0.500" width="1.500" height="7"/><path d="M2 0.500v7L8 4z"/></svg>
<div class="inp" style="left:491px;top:390px;width:48px;height:23px"><span style="left:6px;top:3px">50</span><svg class="a" style="right:4px;top:7px;width:10px;height:7px" viewBox="0 0 10 7" fill="none" stroke="#222" stroke-width="1.800"><path d="M1 1l4 4 4-4"/></svg></div>
<div class="t " style="left:838px;top:393px;transform:translateX(-100%);"><span style="letter-spacing:.5px">1 - 9 &nbsp;&nbsp; 共 9 条</span></div>
</div>
<div class="a" style="left:0;top:551px;width:883px;height:33px;background:linear-gradient(#fbfbfb,#f6f6f6);border-top:1px solid #ececec;border-radius:0 0 3px 3px"></div>
<div class="a b" style="left:748px;top:557px;width:60px;height:25px;background:#31ace6;border:1px solid #2a9fd8;border-radius:2px;color:#fff;font-size:13px;text-align:center;line-height:24px;box-shadow:0 1px 1px rgba(0,0,0,.2)">确定</div>
<div class="btn" style="left:818px;top:557px;width:58px;height:24px;line-height:25px;font-size:12px;color:#222;background:#fbfbfb;border-color:#c4c4c4">取消</div>
<div class="a wm" style="left:0;top:0;width:883px;height:584px;overflow:hidden;border-radius:3px;color:rgba(0,0,0,.055)"><div style="left:-77px;top:-1px">电话：</div><div style="left:-24px;top:-1px;letter-spacing:1.850px">4006-6500-27</div><div style="left:-77px;top:29px">网址：</div><div style="left:-23px;top:29px;letter-spacing:-1.100px">www.tdxsoft.com</div>
<div style="left:194px;top:-1px">电话：</div><div style="left:247px;top:-1px;letter-spacing:1.850px">4006-6500-27</div><div style="left:194px;top:29px">网址：</div><div style="left:248px;top:29px;letter-spacing:-1.100px">www.tdxsoft.com</div>
<div style="left:465px;top:-1px">电话：</div><div style="left:518px;top:-1px;letter-spacing:1.850px">4006-6500-27</div><div style="left:465px;top:29px">网址：</div><div style="left:519px;top:29px;letter-spacing:-1.100px">www.tdxsoft.com</div>
<div style="left:736px;top:-1px">电话：</div><div style="left:789px;top:-1px;letter-spacing:1.850px">4006-6500-27</div><div style="left:736px;top:29px">网址：</div><div style="left:790px;top:29px;letter-spacing:-1.100px">www.tdxsoft.com</div>
<div style="left:-77px;top:109px">电话：</div><div style="left:-24px;top:109px;letter-spacing:1.850px">4006-6500-27</div><div style="left:-77px;top:139px">网址：</div><div style="left:-23px;top:139px;letter-spacing:-1.100px">www.tdxsoft.com</div>
<div style="left:194px;top:109px">电话：</div><div style="left:247px;top:109px;letter-spacing:1.850px">4006-6500-27</div><div style="left:194px;top:139px">网址：</div><div style="left:248px;top:139px;letter-spacing:-1.100px">www.tdxsoft.com</div>
<div style="left:465px;top:109px">电话：</div><div style="left:518px;top:109px;letter-spacing:1.850px">4006-6500-27</div><div style="left:465px;top:139px">网址：</div><div style="left:519px;top:139px;letter-spacing:-1.100px">www.tdxsoft.com</div>
<div style="left:736px;top:109px">电话：</div><div style="left:789px;top:109px;letter-spacing:1.850px">4006-6500-27</div><div style="left:736px;top:139px">网址：</div><div style="left:790px;top:139px;letter-spacing:-1.100px">www.tdxsoft.com</div>
<div style="left:-77px;top:219px">电话：</div><div style="left:-24px;top:219px;letter-spacing:1.850px">4006-6500-27</div><div style="left:-77px;top:249px">网址：</div><div style="left:-23px;top:249px;letter-spacing:-1.100px">www.tdxsoft.com</div>
<div style="left:194px;top:219px">电话：</div><div style="left:247px;top:219px;letter-spacing:1.850px">4006-6500-27</div><div style="left:194px;top:249px">网址：</div><div style="left:248px;top:249px;letter-spacing:-1.100px">www.tdxsoft.com</div>
<div style="left:465px;top:219px">电话：</div><div style="left:518px;top:219px;letter-spacing:1.850px">4006-6500-27</div><div style="left:465px;top:249px">网址：</div><div style="left:519px;top:249px;letter-spacing:-1.100px">www.tdxsoft.com</div>
<div style="left:736px;top:219px">电话：</div><div style="left:789px;top:219px;letter-spacing:1.850px">4006-6500-27</div><div style="left:736px;top:249px">网址：</div><div style="left:790px;top:249px;letter-spacing:-1.100px">www.tdxsoft.com</div>
<div style="left:-77px;top:329px">电话：</div><div style="left:-24px;top:329px;letter-spacing:1.850px">4006-6500-27</div><div style="left:-77px;top:359px">网址：</div><div style="left:-23px;top:359px;letter-spacing:-1.100px">www.tdxsoft.com</div>
<div style="left:194px;top:329px">电话：</div><div style="left:247px;top:329px;letter-spacing:1.850px">4006-6500-27</div><div style="left:194px;top:359px">网址：</div><div style="left:248px;top:359px;letter-spacing:-1.100px">www.tdxsoft.com</div>
<div style="left:465px;top:329px">电话：</div><div style="left:518px;top:329px;letter-spacing:1.850px">4006-6500-27</div><div style="left:465px;top:359px">网址：</div><div style="left:519px;top:359px;letter-spacing:-1.100px">www.tdxsoft.com</div>
<div style="left:736px;top:329px">电话：</div><div style="left:789px;top:329px;letter-spacing:1.850px">4006-6500-27</div><div style="left:736px;top:359px">网址：</div><div style="left:790px;top:359px;letter-spacing:-1.100px">www.tdxsoft.com</div>
<div style="left:-77px;top:439px">电话：</div><div style="left:-24px;top:439px;letter-spacing:1.850px">4006-6500-27</div><div style="left:-77px;top:469px">网址：</div><div style="left:-23px;top:469px;letter-spacing:-1.100px">www.tdxsoft.com</div>
<div style="left:194px;top:439px">电话：</div><div style="left:247px;top:439px;letter-spacing:1.850px">4006-6500-27</div><div style="left:194px;top:469px">网址：</div><div style="left:248px;top:469px;letter-spacing:-1.100px">www.tdxsoft.com</div>
<div style="left:465px;top:439px">电话：</div><div style="left:518px;top:439px;letter-spacing:1.850px">4006-6500-27</div><div style="left:465px;top:469px">网址：</div><div style="left:519px;top:469px;letter-spacing:-1.100px">www.tdxsoft.com</div>
<div style="left:736px;top:439px">电话：</div><div style="left:789px;top:439px;letter-spacing:1.850px">4006-6500-27</div><div style="left:736px;top:469px">网址：</div><div style="left:790px;top:469px;letter-spacing:-1.100px">www.tdxsoft.com</div>
<div style="left:-77px;top:549px">电话：</div><div style="left:-24px;top:549px;letter-spacing:1.850px">4006-6500-27</div><div style="left:-77px;top:579px">网址：</div><div style="left:-23px;top:579px;letter-spacing:-1.100px">www.tdxsoft.com</div>
<div style="left:194px;top:549px">电话：</div><div style="left:247px;top:549px;letter-spacing:1.850px">4006-6500-27</div><div style="left:194px;top:579px">网址：</div><div style="left:248px;top:579px;letter-spacing:-1.100px">www.tdxsoft.com</div>
<div style="left:465px;top:549px">电话：</div><div style="left:518px;top:549px;letter-spacing:1.850px">4006-6500-27</div><div style="left:465px;top:579px">网址：</div><div style="left:519px;top:579px;letter-spacing:-1.100px">www.tdxsoft.com</div>
<div style="left:736px;top:549px">电话：</div><div style="left:789px;top:549px;letter-spacing:1.850px">4006-6500-27</div><div style="left:736px;top:579px">网址：</div><div style="left:790px;top:579px;letter-spacing:-1.100px">www.tdxsoft.com</div></div>
</div>
<div class="red" style="left:381px;top:395px;width:758px;height:47px"></div>
<div class="num" style="left:395px;top:351px">3</div><div class="tip" style="left:424px;top:344px;padding-right:12px">在选择源单界面勾选<span style="font-family:'Noto Sans CJK SC',sans-serif;font-feature-settings:'fwid'">“</span>期初余额<span style="font-family:'Noto Sans CJK SC',sans-serif;font-feature-settings:'fwid'">”</span></div>
</body>
</html>
